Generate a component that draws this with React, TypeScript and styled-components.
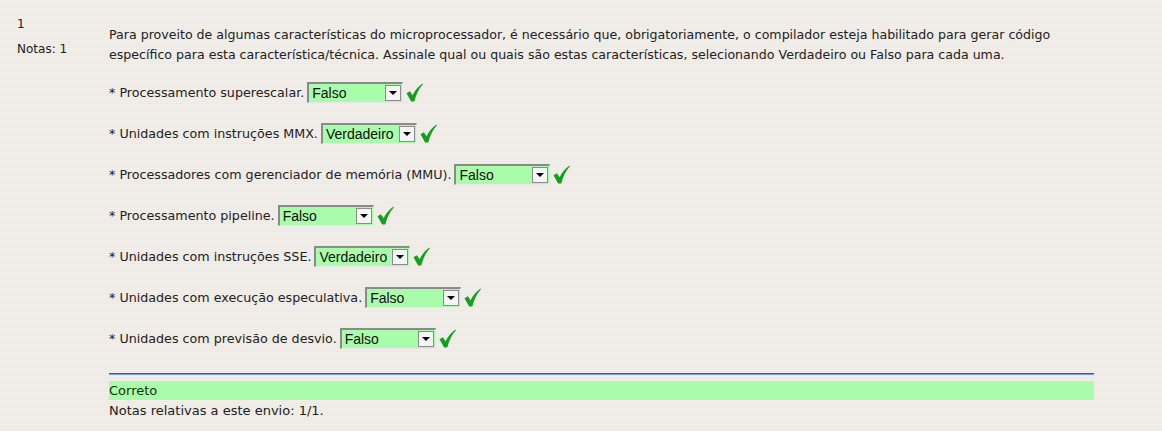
import React from "react";
import styled, { createGlobalStyle } from "styled-components";

const Global = createGlobalStyle`
  html, body { margin: 0; padding: 0; }
  body {
    background-color: #f1ede8;
    background-image: repeating-linear-gradient(
      to bottom,
      #f2eee9 0px, #f2eee9 1px,
      #ede9e3 1px, #ede9e3 2px
    );
    font-family: "DejaVu Sans", Verdana, sans-serif;
    font-size: 13px;
    color: #222;
  }
`;

const Page = styled.div`
  padding: 17px 68px 0 17px;
`;

const Question = styled.div`
  display: flex;
`;

const Info = styled.div`
  width: 92px;
  flex: none;
  display: flex;
  flex-direction: column;
  gap: 10px;
  line-height: 15px;
  font-size: 12px;
`;

const Content = styled.div`
  flex: 1;
  padding-top: 8px;
`;

const Prompt = styled.p`
  margin: 0 0 17px 0;
  line-height: 20px;
  font-size: 12.6px;
`;

const Options = styled.div`
  display: flex;
  flex-direction: column;
  gap: 20px;
`;

const OptionRow = styled.div`
  display: flex;
  align-items: center;
  height: 21px;
`;

const Label = styled.span`
  margin-right: 3px;
  font-size: 12.7px;
`;

const FakeSelect = styled.div`
  width: 96px;
  height: 21px;
  box-sizing: border-box;
  display: flex;
  align-items: center;
  background: #a9fca9;
  border-top: 2px solid #8a8a8a;
  border-left: 2px solid #8a8a8a;
  border-right: 1px solid #e8e8e8;
  border-bottom: 1px solid #e8e8e8;
  font-family: "Liberation Sans", Arial, sans-serif;
  font-size: 14px;
  color: #111;
`;

const SelectValue = styled.span`
  flex: 1;
  padding-left: 3px;
`;

const SelectButton = styled.span`
  width: 16px;
  height: 16px;
  margin-right: 1px;
  box-sizing: border-box;
  background: #f4f4f4;
  border: 1px solid #8c8c8c;
  display: flex;
  align-items: center;
  justify-content: center;
`;

const Arrow = styled.span`
  width: 0;
  height: 0;
  border-left: 4px solid transparent;
  border-right: 4px solid transparent;
  border-top: 4px solid #000;
`;

const Check = styled.svg`
  margin-left: 3px;
  flex: none;
`;

const Feedback = styled.div`
  margin-top: 24px;
  border-top: 1px solid #2458d0;
  box-shadow: inset 0 1px 0 #7c9be0;
  padding-top: 7px;
`;

const Correct = styled.div`
  background: #a9fca9;
  height: 19px;
  line-height: 19px;
  color: #123212;
`;

const Grade = styled.div`
  line-height: 22px;
  color: #222;
`;

const items: { label: string; value: string }[] = [
  { label: "* Processamento superescalar.", value: "Falso" },
  { label: "* Unidades com instruções MMX.", value: "Verdadeiro" },
  { label: "* Processadores com gerenciador de memória (MMU).", value: "Falso" },
  { label: "* Processamento pipeline.", value: "Falso" },
  { label: "* Unidades com instruções SSE.", value: "Verdadeiro" },
  { label: "* Unidades com execução especulativa.", value: "Falso" },
  { label: "* Unidades com previsão de desvio.", value: "Falso" },
];

function CheckIcon() {
  return (
    <Check width="17" height="19" viewBox="0 0 17 19">
      <path
        d="M0.5 10.2 L3.9 8.2 L6.6 12.3 C9 7.5 12 3.6 16.6 0.6 L16.8 1.6 C13 5.6 10.2 11 8.3 18.6 L5.1 18.6 Z"
        fill="#159f1d"
      />
    </Check>
  );
}

export default function App() {
  return (
    <>
      <Global />
      <Page>
        <Question>
          <Info>
            <span>1</span>
            <span>Notas: 1</span>
          </Info>
          <Content>
            <Prompt>
              Para proveito de algumas características do microprocessador, é necessário que, obrigatoriamente, o compilador esteja habilitado para gerar código específico para esta característica/técnica. Assinale qual ou quais são estas características, selecionando Verdadeiro ou Falso para cada uma.
            </Prompt>
            <Options>
              {items.map((it) => (
                <OptionRow key={it.label}>
                  <Label>{it.label}</Label>
                  <FakeSelect>
                    <SelectValue>{it.value}</SelectValue>
                    <SelectButton>
                      <Arrow />
                    </SelectButton>
                  </FakeSelect>
                  <CheckIcon />
                </OptionRow>
              ))}
            </Options>
            <Feedback>
              <Correct>Correto</Correct>
              <Grade>Notas relativas a este envio: 1/1.</Grade>
            </Feedback>
          </Content>
        </Question>
      </Page>
    </>
  );
}
